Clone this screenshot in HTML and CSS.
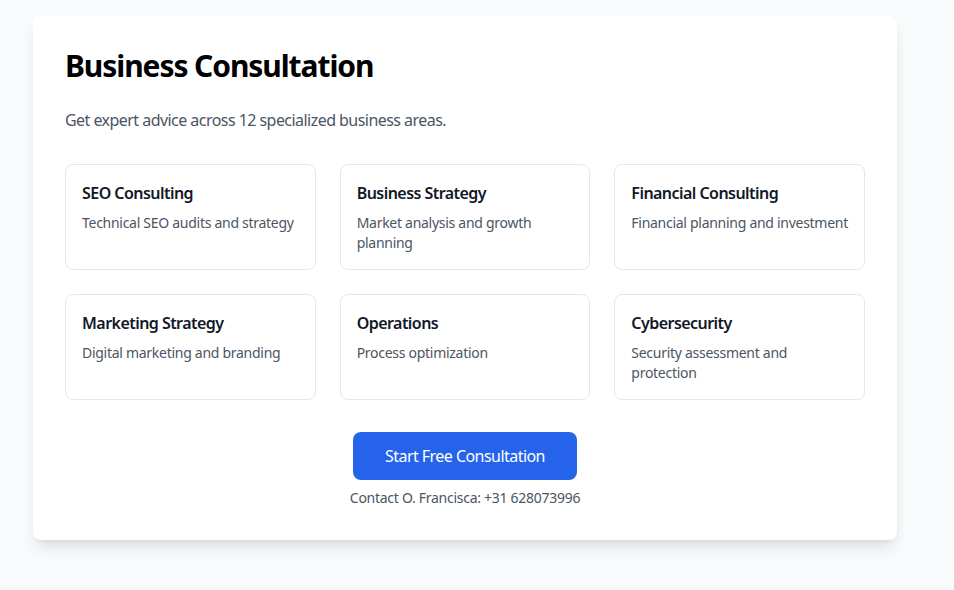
FILE: index.html
```html
<!DOCTYPE html>
<html lang="en">
<head>
<meta charset="utf-8">
<title>Business Consultation</title>
<link rel="stylesheet" href="styles.css">
</head>
<body>
<main class="card">
  <h1 class="title">Business Consultation</h1>
  <p class="subtitle">Get expert advice across 12 specialized business areas.</p>
  <div class="grid">
    <div class="tile"><h3 class="tile-title">SEO Consulting</h3><p class="tile-desc">Technical SEO audits and strategy</p></div>
    <div class="tile"><h3 class="tile-title">Business Strategy</h3><p class="tile-desc">Market analysis and growth planning</p></div>
    <div class="tile"><h3 class="tile-title">Financial Consulting</h3><p class="tile-desc">Financial planning and investment</p></div>
    <div class="tile"><h3 class="tile-title">Marketing Strategy</h3><p class="tile-desc">Digital marketing and branding</p></div>
    <div class="tile"><h3 class="tile-title">Operations</h3><p class="tile-desc">Process optimization</p></div>
    <div class="tile"><h3 class="tile-title">Cybersecurity</h3><p class="tile-desc">Security assessment and protection</p></div>
  </div>
  <div class="cta">
    <button class="btn" type="button">Start Free Consultation</button>
    <p class="contact">Contact O. Francisca: +31 628073996</p>
  </div>
</main>
</body>
</html>
```
FILE: styles.css
```css
* { box-sizing: border-box; }
html, body { margin: 0; }
body {
  background: #f9fafb;
  font-family: "Noto Sans", "Open Sans", sans-serif;
  letter-spacing: -0.034em;
  padding: 16px 0 0 33px;
  height: 590px;
}
.card {
  width: 864px;
  background: #fff;
  border-radius: 8px;
  box-shadow: 0 10px 15px -3px rgba(0,0,0,0.1), 0 4px 6px -4px rgba(0,0,0,0.1);
  padding: 32px;
}
.title {
  margin: 0 0 24px;
  font-size: 30px;
  line-height: 36px;
  font-weight: 700;
  color: #000;
  letter-spacing: -0.036em;
}
.subtitle {
  margin: 0 0 32px;
  font-size: 16px;
  line-height: 24px;
  color: #4b5563;
}
.grid {
  display: grid;
  grid-template-columns: repeat(3, 1fr);
  gap: 24px;
}
.tile {
  border: 1px solid #e5e7eb;
  border-radius: 8px;
  padding: 16px;
}
.tile-title {
  margin: 0 0 8px;
  font-size: 16px;
  line-height: 24px;
  font-weight: 600;
  color: #111827;
}
.tile-desc {
  margin: 0;
  font-size: 14px;
  line-height: 20px;
  color: #4b5563;
  letter-spacing: -0.02em;
}
.cta {
  margin-top: 32px;
  display: flex;
  flex-direction: column;
  align-items: center;
}
.btn {
  background: #2563eb;
  color: #fff;
  border: none;
  border-radius: 8px;
  font-family: inherit;
  letter-spacing: inherit;
  font-size: 16px;
  line-height: 24px;
  padding: 12px 32px;
  cursor: pointer;
}
.contact {
  margin: 8px 0 0;
  font-size: 14px;
  line-height: 20px;
  color: #4b5563;
  letter-spacing: -0.02em;
}
```
